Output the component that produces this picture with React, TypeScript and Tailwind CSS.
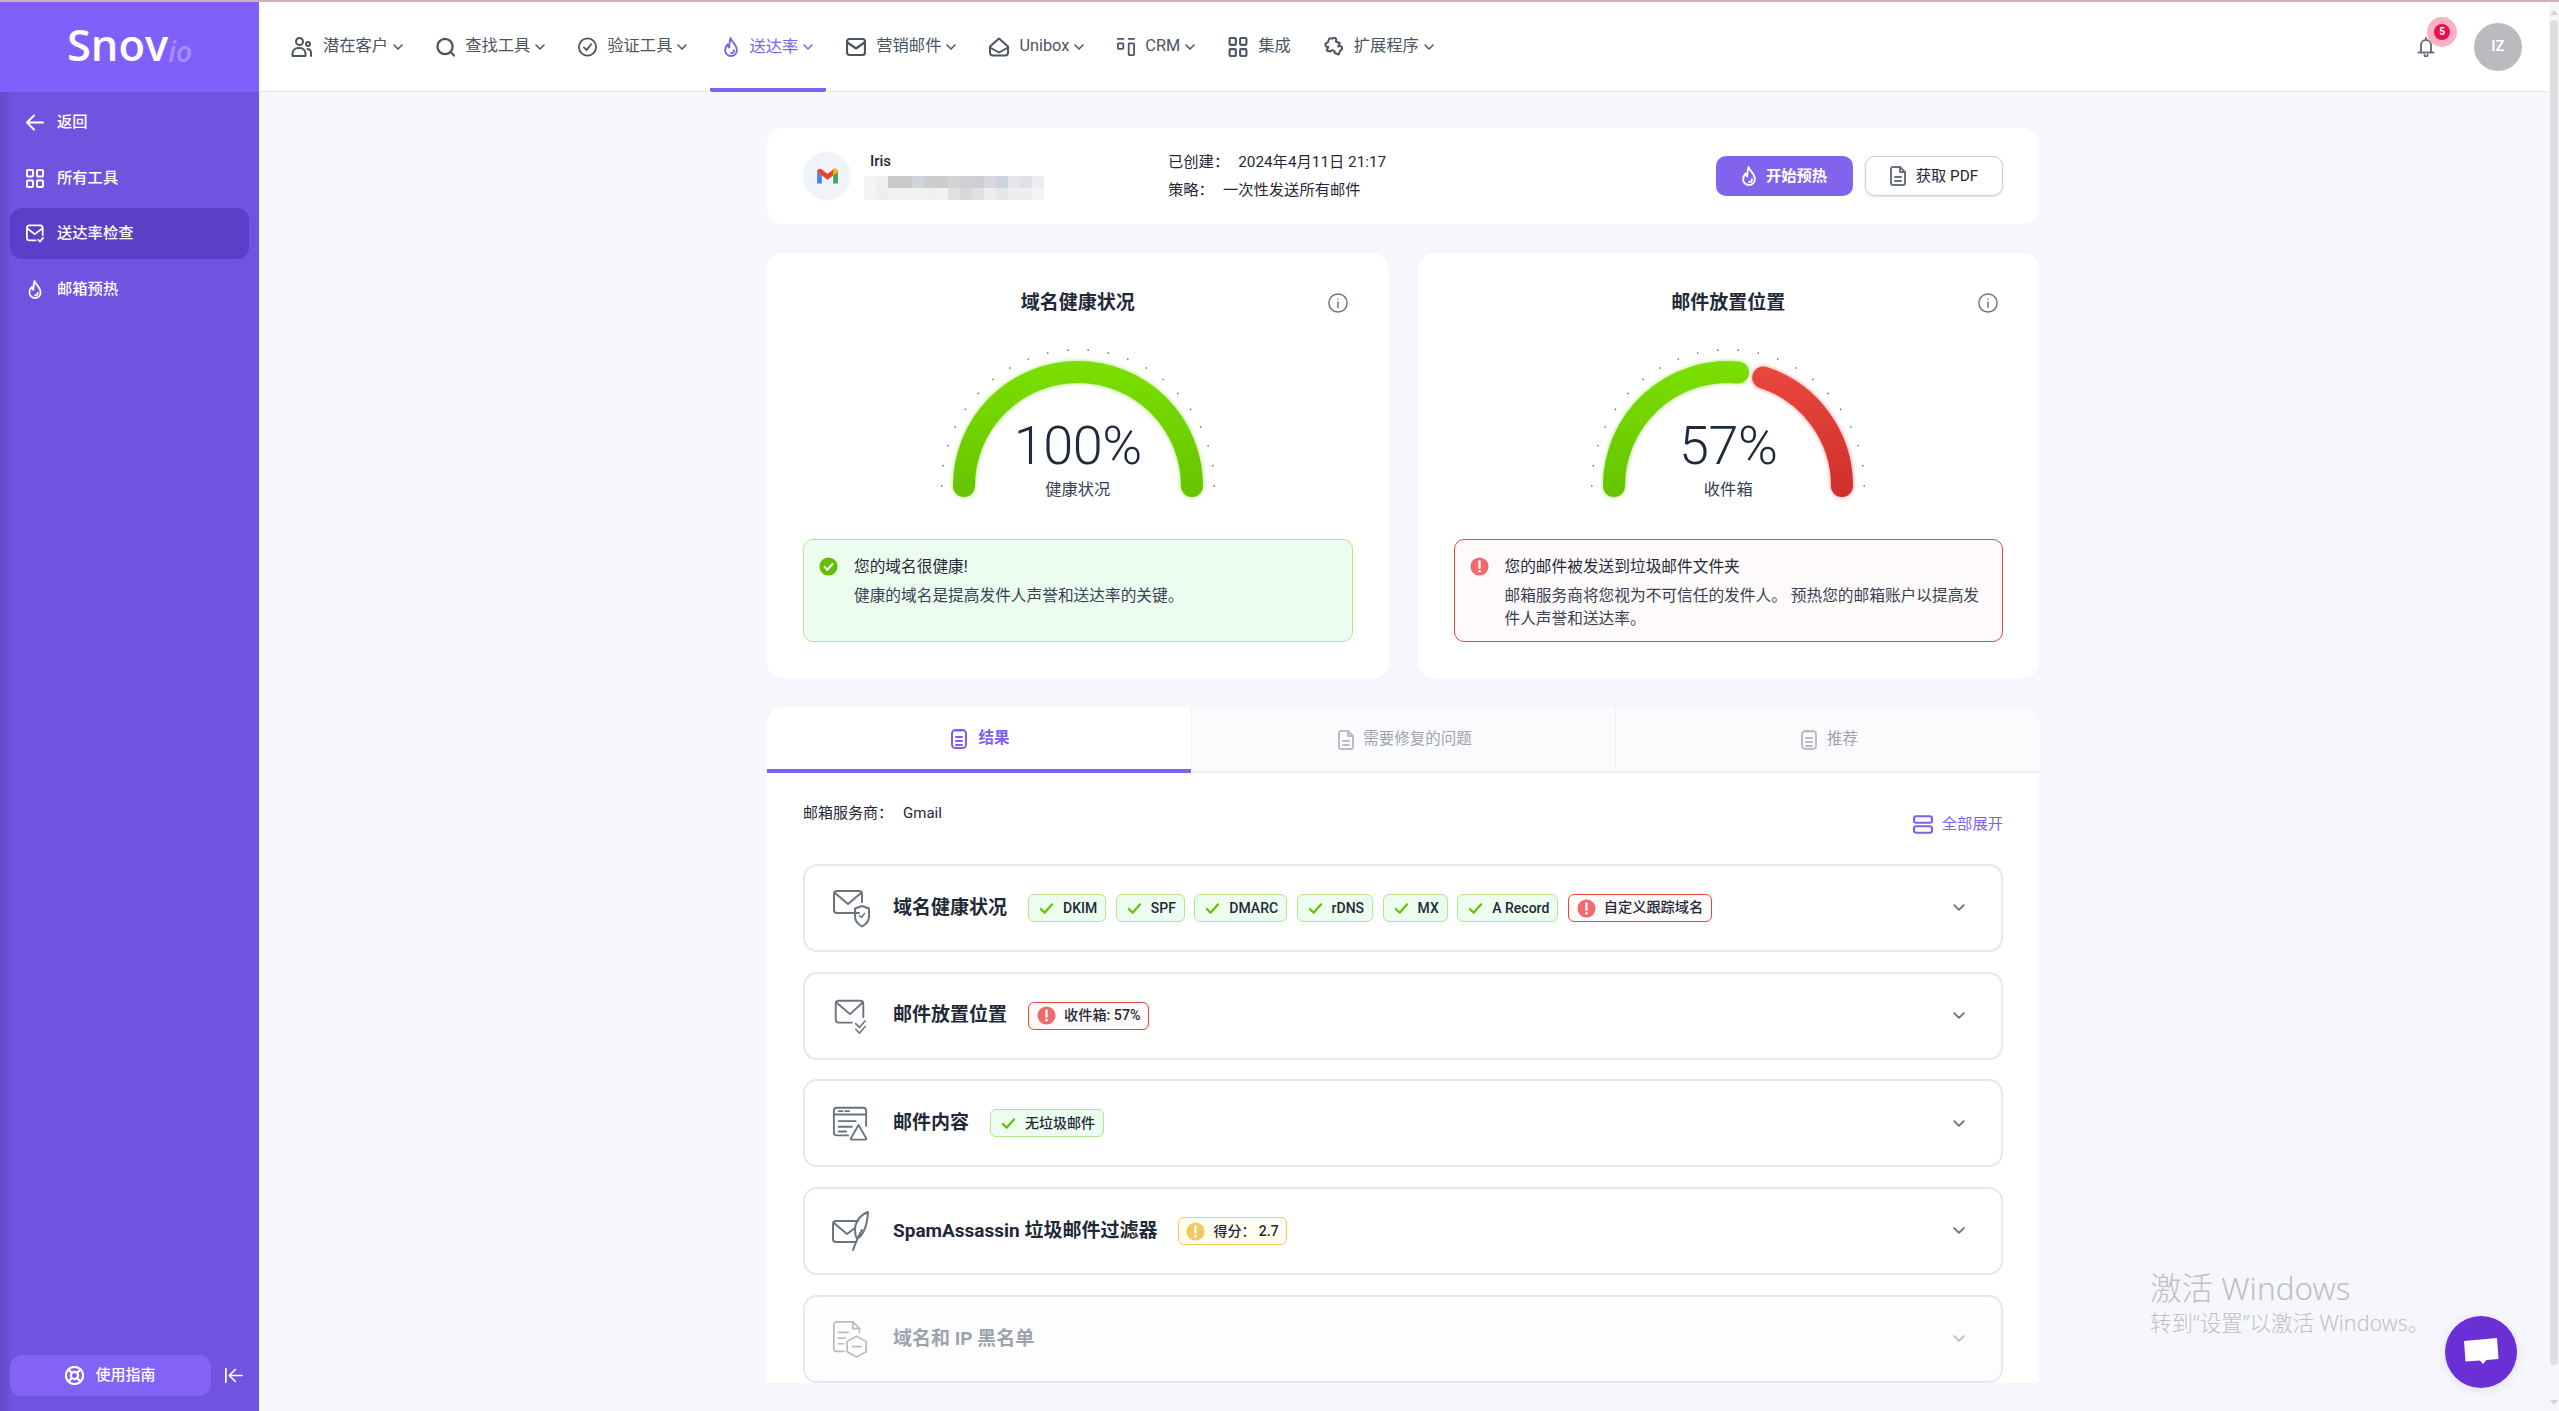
import type { ReactNode } from "react";

type IconProps = { className?: string };

const Svg = ({ className, children, sw = 2, vb = "0 0 24 24" }: { className?: string; children: ReactNode; sw?: number; vb?: string }) => (
  <svg viewBox={vb} fill="none" stroke="currentColor" strokeWidth={sw} strokeLinecap="round" strokeLinejoin="round" className={className}>
    {children}
  </svg>
);

const Chevron = ({ className }: IconProps) => (
  <svg viewBox="0 0 10 6" fill="none" stroke="currentColor" strokeWidth="1.5" strokeLinecap="round" strokeLinejoin="round" className={className}>
    <path d="M1 1l4 4 4-4" />
  </svg>
);
const Flame = ({ className }: IconProps) => (
  <Svg className={className} vb="5 1.500 14 20.500" sw={1.900}>
    <path d="M11.500 2.500c.6 3.500 6.500 6.500 6.500 12.500a6 6 0 0 1-12 0c0-2.600 1-4.500 2.500-6 .2 1.700.8 2.700 1.700 3.200C10.400 9 10.400 5.500 11.500 2.500z" />
    <path d="M15 15a3 3 0 0 1-3 3" />
  </Svg>
);
const Users = ({ className }: IconProps) => (
  <Svg className={className} vb="2 2 21 20">
    <circle cx="10" cy="6.500" r="3.500" />
    <path d="M3 21v-2.500a5.500 5.500 0 0 1 5.500-5.500h2a5.500 5.500 0 0 1 5.500 5.500V21z" />
    <circle cx="18.500" cy="9" r="2" />
    <path d="M18 14c2 .3 3.500 2 3.500 4v3" />
  </Svg>
);
const Search = ({ className }: IconProps) => (
  <Svg className={className} sw={2.400} vb="2 2 20 20">
    <circle cx="11.500" cy="11.500" r="8" />
    <path d="M17.500 17.500L21 21" />
  </Svg>
);
const CheckCircle = ({ className }: IconProps) => (
  <Svg className={className} vb="1.500 1.500 21 21">
    <circle cx="12" cy="12" r="9.500" />
    <path d="M8 12.500l3 3 5-6.500" />
  </Svg>
);
const Mail = ({ className }: IconProps) => (
  <Svg className={className} sw={2.200} vb="2 3 20 18">
    <rect x="3" y="4" width="18" height="16" rx="2.500" />
    <path d="M3.500 7.500L12 13.500l8.500-6" />
  </Svg>
);
const Inbox = ({ className }: IconProps) => (
  <Svg className={className} vb="2 3 20 19">
    <path d="M3 12L12 4l9 8v6a3 3 0 0 1-3 3H6a3 3 0 0 1-3-3z" />
    <path d="M3 13l9 5 9-5" />
  </Svg>
);
const Crm = ({ className }: IconProps) => (
  <Svg className={className} vb="2 2 20 20">
    <path d="M3 3h6M15 3h6" />
    <rect x="3" y="8" width="6" height="6" rx="1" />
    <rect x="15" y="8" width="6" height="13" rx="1" />
  </Svg>
);
const Grid = ({ className }: IconProps) => (
  <Svg className={className} vb="3 2.500 18 19">
    <rect x="4" y="3.500" width="6" height="6.500" rx="1" />
    <rect x="14" y="3.500" width="6" height="6.500" rx="1" />
    <rect x="4" y="14" width="6" height="6.500" rx="1" />
    <rect x="14" y="14" width="6" height="6.500" rx="1" />
  </Svg>
);
const Puzzle = ({ className }: IconProps) => (
  <Svg className={className} vb="3 2 18.500 20">
    <path d="M11 3.500a2 2 0 0 1 3.500 1.500l-.5 1.500 4 1.500-1.500 3.500a2.200 2.200 0 0 1 3 3.500l-1 .5-1.500 4-4-1.500a2.300 2.300 0 0 0-4.300-1.500L5 15.500 6.500 12a2.300 2.300 0 0 1-2-4l1.500-.5L7.500 3.500z" />
  </Svg>
);
const ArrowBack = ({ className }: IconProps) => (
  <Svg className={className} vb="3 3 18 18">
    <path d="M20 12H5M11 5l-7 7 7 7" />
  </Svg>
);
const MailCheck = ({ className }: IconProps) => (
  <Svg className={className} vb="2 2 20.500 20.500">
    <path d="M13 20H6a3 3 0 0 1-3-3V6a3 3 0 0 1 3-3h12a3 3 0 0 1 3 3v8" />
    <path d="M3.500 6.500L12 13l8.500-6.500" />
    <path d="M16 19.500l2 2 3.500-4.500" />
  </Svg>
);
const Buoy = ({ className }: IconProps) => (
  <Svg className={className} sw={2.400} vb="1.500 1.500 21 21">
    <circle cx="12" cy="12" r="9.500" />
    <circle cx="12" cy="12" r="4" />
    <path d="M5.300 5.300l4 4M14.700 14.700l4 4M18.700 5.300l-4 4M9.300 14.700l-4 4" />
  </Svg>
);
const Collapse = ({ className }: IconProps) => (
  <Svg className={className} vb="2 3 21 18">
    <path d="M3 4v16M22 12H8M14 5l-7 7 7 7" />
  </Svg>
);
const Info = ({ className }: IconProps) => (
  <Svg className={className} sw={1.600} vb="1 1 22 22">
    <circle cx="12" cy="12" r="10" />
    <path d="M12 11v6" />
    <path d="M12 7.500v.1" />
  </Svg>
);
const Bell = ({ className }: IconProps) => (
  <Svg className={className} sw={2} vb="4 2 16 20">
    <path d="M7 17V10a5 5 0 0 1 10 0v7" />
    <path d="M4.500 17.500h15M12 3v2M10.500 20a1.500 1.500 0 0 0 3 0" />
  </Svg>
);
const Doc = ({ className }: IconProps) => (
  <Svg className={className} vb="4 2 16 20">
    <path d="M7 3h7l5 5v11a2 2 0 0 1-2 2H7a2 2 0 0 1-2-2V5a2 2 0 0 1 2-2z" />
    <path d="M14 3v5h5M9 13h6M9 17h6" />
  </Svg>
);
const Note = ({ className }: IconProps) => (
  <Svg className={className} vb="4 2 16 20">
    <rect x="5" y="3" width="14" height="18" rx="3.500" />
    <path d="M9 3.500h6M9 10h6M9 14h6M9 18h6" />
  </Svg>
);
const Stack = ({ className }: IconProps) => (
  <Svg className={className} sw={2.200} vb="2 3 20 18.500">
    <rect x="3" y="4" width="18" height="6.500" rx="2" />
    <rect x="3" y="14" width="18" height="6.500" rx="2" />
  </Svg>
);
const Check = ({ className }: IconProps) => (
  <svg viewBox="0 0 16 16" fill="none" stroke="currentColor" strokeWidth="2.200" strokeLinecap="round" strokeLinejoin="round" className={className}>
    <path d="M2 8.500l4 4L14 3.500" />
  </svg>
);
const Alert = ({ className }: IconProps) => (
  <svg viewBox="0 0 20 20" className={className}>
    <circle cx="10" cy="10" r="9.500" fill="currentColor" />
    <path d="M10 4.500v7" stroke="white" strokeWidth="2.400" strokeLinecap="round" />
    <circle cx="10" cy="15" r="1.400" fill="white" />
  </svg>
);
const OkDot = ({ className }: IconProps) => (
  <svg viewBox="0 0 20 20" className={className}>
    <circle cx="10" cy="10" r="9.500" fill="currentColor" />
    <path d="M5.800 10.400l3 3 5.400-6" fill="none" stroke="white" strokeWidth="2.200" strokeLinecap="round" strokeLinejoin="round" />
  </svg>
);
const Gmail = () => (
  <svg viewBox="0 0 24 18" className="h-[17px] w-[23px]">
    <path d="M1 4v12.500h5V8z" fill="#4285f4" />
    <path d="M23 4v12.500h-5V8z" fill="#34a853" />
    <path d="M1 4c0-3 3-4 5-2.500L12 6l6-4.500C20 0 23 1 23 4l-5 4-6 4.500L6 8z" fill="#ea4335" />
    <path d="M18 1.500C20 0 23 1 23 4l-5 4z" fill="#fbbc04" />
  </svg>
);

const RowShield = ({ className }: IconProps) => (
  <svg viewBox="0 0 40 40" fill="none" stroke="currentColor" strokeWidth="2" strokeLinecap="round" strokeLinejoin="round" className={className}>
    <path d="M28 25H6a3 3 0 0 1-3-3V6a3 3 0 0 1 3-3h22a3 3 0 0 1 3 3v8" />
    <path d="M4 5l13 11L30 5" />
    <path d="M31 18l7 2.500v8c0 5-3.500 8-7 10-3.500-2-7-5-7-10v-8z" />
    <path d="M28.500 27.500l2 2 3-4" strokeWidth="1.500" />
  </svg>
);
const RowChecks = ({ className }: IconProps) => (
  <svg viewBox="0 0 40 40" fill="none" stroke="currentColor" strokeWidth="2" strokeLinecap="round" strokeLinejoin="round" className={className}>
    <path d="M22 27H8a3 3 0 0 1-3-3V7a3 3 0 0 1 3-3h23a3 3 0 0 1 3 3v14" />
    <path d="M6 6l14 12L33 6" />
    <path d="M26 28l4 4 6-7M26 34l4 4 6-7" strokeWidth="1.600" />
  </svg>
);
const RowWeb = ({ className }: IconProps) => (
  <svg viewBox="0 0 40 40" fill="none" stroke="currentColor" strokeWidth="2" strokeLinecap="round" strokeLinejoin="round" className={className}>
    <path d="M18 33H6a3 3 0 0 1-3-3V7a3 3 0 0 1 3-3h28a3 3 0 0 1 3 3v16" />
    <path d="M3 11h34M8 7.500h4M15 7.500h4M8 18h18M8 24h14M8 29h8" />
    <path d="M29 22l8 14a1 1 0 0 1-1 1.500H22a1 1 0 0 1-1-1.500z" />
  </svg>
);
const RowFeather = ({ className }: IconProps) => (
  <svg viewBox="0 0 40 40" fill="none" stroke="currentColor" strokeWidth="2" strokeLinecap="round" strokeLinejoin="round" className={className}>
    <path d="M24 31H5a3 3 0 0 1-3-3V13a3 3 0 0 1 3-3h22" />
    <path d="M3 12l13 11 8-6" />
    <path d="M37 1c-8 3-13 10-13 18 0 4 1 7 2 9 5-3 10-11 11-27zM22 39c2-5 5-14 9-20" />
  </svg>
);
const RowDoc = ({ className }: IconProps) => (
  <svg viewBox="0 0 40 40" fill="none" stroke="currentColor" strokeWidth="1.800" strokeLinecap="round" strokeLinejoin="round" className={className}>
    <path d="M14 33H6a3 3 0 0 1-3-3V5a3 3 0 0 1 3-3h17l7 7v4" />
    <path d="M23 2v7h7M8 13h10M8 19h7M8 25h5" />
    <path d="M27 17l10 5.500v11L27 39l-10-5.500v-11z" />
    <path d="M22.500 28h9" />
  </svg>
);

const navItems = [
  { icon: Users, label: "潜在客户", iw: "w-[22px]", caret: true },
  { icon: Search, label: "查找工具", iw: "w-[19px]", caret: true },
  { icon: CheckCircle, label: "验证工具", iw: "w-[19px]", caret: true },
  { icon: Flame, label: "送达率", iw: "w-[16px]", caret: true, active: true },
  { icon: Mail, label: "营销邮件", iw: "w-[20px]", caret: true },
  { icon: Inbox, label: "Unibox", iw: "w-[20px]", caret: true },
  { icon: Crm, label: "CRM", iw: "w-[18px]", caret: true },
  { icon: Grid, label: "集成", iw: "w-[20px]" },
  { icon: Puzzle, label: "扩展程序", iw: "w-[20px]", caret: true },
];

const sideItems = [
  { icon: ArrowBack, label: "返回" },
  { icon: Grid, label: "所有工具" },
  { icon: MailCheck, label: "送达率检查", active: true },
  { icon: Flame, label: "邮箱预热" },
];

const blurTop = ["bg-[#f3f3f5]", "bg-[#efeff1]", "bg-[#c9c9cc]", "bg-[#c9c9cc]", "bg-[#d0d4dc]", "bg-[#cdcdd0]", "bg-[#cdcdd0]", "bg-[#d4d4d7]", "bg-[#d0d0d3]", "bg-[#ccd0d6]", "bg-[#d8d8dc]", "bg-[#ccd4de]", "bg-[#e6e6e8]", "bg-[#dde0e4]", "bg-[#eeeef0]"];
const blurBottom = ["bg-[#f4f4f5]", "bg-[#eeeef0]", "bg-[#f2f2f3]", "bg-[#f2f2f3]", "bg-[#f2f2f3]", "bg-[#f0f0f2]", "bg-[#f2f2f3]", "bg-[#e0e0e2]", "bg-[#d8d8da]", "bg-[#e0e0e2]", "bg-[#eeeef0]", "bg-[#e6e6e8]", "bg-[#eeeef0]", "bg-[#eeeef0]", "bg-[#f4f4f5]"];

// angles are measured from the +x axis, 180 = left end of the gauge
const polar = (r: number, deg: number) => {
  const a = (deg * Math.PI) / 180;
  return { x: 150 + r * Math.cos(a), y: 145 - r * Math.sin(a) };
};
const arc = (from: number, to: number) => {
  const s = polar(114, from);
  const e = polar(114, to);
  return `M${s.x} ${s.y}A114 114 0 0 1 ${e.x} ${e.y}`;
};

function Gauge({ id, value, label, split }: { id: string; value: string; label: string; split?: boolean }) {
  const ticks = Array.from({ length: 22 }, (_, i) => (i * 180) / 21);
  return (
    <div className="relative mx-auto mt-[26px] h-[160px] w-[300px]">
      <svg viewBox="0 0 300 160" className="h-[160px] w-[300px]" fill="none">
        <defs>
          <linearGradient id={`${id}-g`} gradientUnits="userSpaceOnUse" x1="0" y1="20" x2="0" y2="156">
            <stop offset="0" stopColor="#7bdf00" />
            <stop offset="1" stopColor="#66c400" />
          </linearGradient>
          <linearGradient id={`${id}-r`} gradientUnits="userSpaceOnUse" x1="0" y1="30" x2="0" y2="156">
            <stop offset="0" stopColor="#e8463e" />
            <stop offset="1" stopColor="#cf2f2a" />
          </linearGradient>
        </defs>
        {ticks.map((d) => {
          const a = polar(135.5, d);
          const b = polar(137, d);
          return <line key={d} x1={a.x} y1={a.y} x2={b.x} y2={b.y} stroke="#6b7280" strokeWidth="1.500" />;
        })}
        {split ? (
          <>
            <path d={arc(180, 85)} stroke={`url(#${id}-g)`} strokeWidth="22" strokeLinecap="round" className="drop-shadow-[0_0_2px_rgba(110,210,0,0.6)]" />
            <path d={arc(72, 0)} stroke={`url(#${id}-r)`} strokeWidth="22" strokeLinecap="round" className="drop-shadow-[0_0_2px_rgba(230,60,50,0.6)]" />
          </>
        ) : (
          <path d={arc(180, 0)} stroke={`url(#${id}-g)`} strokeWidth="22" strokeLinecap="round" className="drop-shadow-[0_0_2px_rgba(110,210,0,0.6)]" />
        )}
      </svg>
      <div className="absolute inset-x-0 top-[75px] flex flex-col items-center">
        <span className="text-[54px] leading-[60px] font-light tracking-[-0.5px] text-[#1f2a3c]">{value}</span>
        <span className="mt-[2px] text-[16.300px] leading-[24px] text-[#374151]">{label}</span>
      </div>
    </div>
  );
}

function GaugeCard({ id, title, value, label, split, children }: { id: string; title: string; value: string; label: string; split?: boolean; children: ReactNode }) {
  return (
    <div className="rounded-[16px] bg-white px-[36px] pt-[38px] pb-[36px]">
      <div className="relative flex h-[24px] items-center justify-center">
        <h2 className="text-[19px] font-bold text-[#1f2937]">{title}</h2>
        <Info className="absolute top-[2px] right-[5px] h-[20px] w-[20px] text-[#6b7280]" />
      </div>
      <Gauge id={id} value={value} label={label} split={split} />
      {children}
    </div>
  );
}

function Chip({ tone, children }: { tone: "ok" | "bad" | "warn"; children: ReactNode }) {
  if (tone === "ok") {
    return (
      <span className="flex h-[28px] items-center gap-[9px] rounded-[6px] border-[1.500px] border-[#b5e58f] bg-[#ecfdf0] pr-[8px] pl-[10px] text-[14px] font-medium text-[#1f2937]">
        <Check className="h-[15px] w-[15px] text-[#62bf00]" />
        {children}
      </span>
    );
  }
  return (
    <span
      className={
        tone === "bad"
          ? "flex h-[28px] items-center gap-[8px] rounded-[6px] border-[1.500px] border-[#e8453f] bg-[#fffafa] pr-[8px] pl-[8px] text-[14.200px] font-medium text-[#1f2937]"
          : "flex h-[28px] items-center gap-[8px] rounded-[6px] border-[1.500px] border-[#f7ca58] bg-[#fffcf0] pr-[7px] pl-[7px] text-[14px] font-medium text-[#1f2937]"
      }
    >
      <Alert className={tone === "bad" ? "h-[19px] w-[19px] text-[#f06a6f]" : "h-[19px] w-[19px] text-[#f2c960]"} />
      {children}
    </span>
  );
}

function Row({ icon, title, muted, children }: { icon: ReactNode; title: string; muted?: boolean; children?: ReactNode }) {
  return (
    <div className={muted ? "flex h-[88px] items-center rounded-[14px] border-2 border-[#e8e8ea] bg-[#fdfdfe] pr-[36px] pl-[26px]" : "flex h-[88px] items-center rounded-[14px] border-2 border-[#e8e8ea] bg-white pr-[36px] pl-[26px]"}>
      <div className={muted ? "w-[40px] shrink-0 text-[#b8bcc4]" : "w-[40px] shrink-0 text-[#6b7280]"}>{icon}</div>
      <h3 className={muted ? "ml-[22px] text-[19px] font-bold text-[#9ca3af]" : "ml-[22px] text-[19px] font-bold text-[#1f2937]"}>{title}</h3>
      <div className="ml-[21px] flex items-center gap-[9.500px]">{children}</div>
      <Chevron className={muted ? "ml-auto w-[12px] text-[#b8bcc4]" : "ml-auto w-[12px] text-[#6b7280]"} />
    </div>
  );
}

export default function App() {
  return (
    <div className="relative flex h-[1411px] w-full flex-col overflow-hidden bg-[#f6f7fc] font-[family-name:Roboto,'Noto_Sans_CJK_SC',sans-serif] text-[#1f2937]">
      <div className="h-[2px] shrink-0 bg-[#c9b2bd]" />
      <div className="flex min-h-0 flex-1">
        <aside className="flex w-[259px] shrink-0 flex-col bg-[linear-gradient(90deg,#654cc9_0,#7054e0_14px)]">
          <div className="flex h-[90px] shrink-0 items-center justify-center bg-[#8060fb] pb-[5px] font-[family-name:'Open_Sans',sans-serif] text-white">
            <span className="text-[43.500px] leading-none font-semibold">Snov</span>
            <span className="mt-[12px] text-[28px] leading-none font-semibold text-[#a88ffd] italic">io</span>
          </div>
          <nav className="flex flex-col gap-[4.500px] px-[10px] pt-[5px]">
            {sideItems.map((it) => (
              <div key={it.label} className={it.active ? "flex h-[51px] items-center gap-[13px] rounded-[12px] bg-[#5b3fc8] pl-[16px] text-[15.300px] font-medium text-white" : "flex h-[51px] items-center gap-[13px] rounded-[12px] pl-[16px] text-[15.300px] font-medium text-white"}>
                <it.icon className="h-[19px] w-[18px] shrink-0" />
                {it.label}
              </div>
            ))}
          </nav>
          <div className="mt-auto flex items-center pr-[16px] pb-[15px] pl-[10px]">
            <div className="flex h-[41px] w-[201px] items-center justify-center gap-[11px] rounded-[12px] bg-[#8263f5] text-[15px] font-medium text-white">
              <Buoy className="h-[19px] w-[19px]" />
              使用指南
            </div>
            <Collapse className="ml-auto h-[17px] w-[18px] text-white" />
          </div>
        </aside>

        <div className="flex min-w-0 flex-1 flex-col">
          <header className="flex h-[90px] shrink-0 items-center border-b border-[#e5e7eb] bg-white pr-[27px] pl-[19px]">
            <nav className="flex h-full gap-[7px]">
              {navItems.map((it) => (
                <div key={it.label} className={it.active ? "-mb-px ml-[3px] flex items-center rounded-b-[2px] border-b-4 border-[#7e5fee] px-[13px] pt-[4px] text-[16.300px] text-[#7e5fee]" : "flex items-center px-[13px] text-[16.300px] text-[#4b5563]"}>
                  <it.icon className={`h-[20px] ${it.iw} shrink-0`} />
                  <span className="ml-[10px]">{it.label}</span>
                  {it.caret && <Chevron className="ml-[5px] w-[10px]" />}
                </div>
              ))}
            </nav>
            <div className="relative ml-auto h-[20px] w-[18px] text-[#6b7280]">
              <Bell className="h-[20px] w-[18px]" />
              <span className="absolute -top-[20px] left-[10px] flex h-[30px] w-[30px] items-center justify-center rounded-full bg-[#fbb0c3]">
                <span className="flex h-[16px] w-[16px] items-center justify-center rounded-full bg-[#e8114f] text-[10px] font-bold text-white">5</span>
              </span>
            </div>
            <div className="ml-[39px] flex h-[48px] w-[48px] items-center justify-center rounded-full bg-[#b9bbc0] text-[15px] font-medium text-white">IZ</div>
          </header>

          <main className="ml-[508px] w-[1272px] pt-[36px]">
            <section className="flex h-[96px] items-center rounded-[16px] bg-white px-[36px]">
              <div className="flex h-[48px] w-[48px] shrink-0 items-center justify-center rounded-full bg-[#f0f3f8]">
                <Gmail />
              </div>
              <div className="ml-[13px] w-[304px] shrink-0">
                <p className="-mt-[1px] pl-[6px] text-[15px] leading-[19px] font-medium">Iris</p>
                <div className="mt-[5px] w-[180px]">
                  <div className="flex">
                    {blurTop.map((c, i) => (
                      <span key={i} className={`h-[12px] flex-1 ${c}`} />
                    ))}
                  </div>
                  <div className="flex">
                    {blurBottom.map((c, i) => (
                      <span key={i} className={`h-[12px] flex-1 ${c}`} />
                    ))}
                  </div>
                </div>
              </div>
              <div className="text-[15.300px] leading-[28px] text-[#1f2937]">
                <p className="flex gap-[9px]">
                  <span>已创建：</span>2024年4月11日 21:17
                </p>
                <p className="flex gap-[9px]">
                  <span>策略：</span>一次性发送所有邮件
                </p>
              </div>
              <div className="ml-auto flex gap-[12px]">
                <button className="flex h-[40px] w-[137px] items-center justify-center gap-[10px] rounded-[10px] bg-[#8263ed] text-[15.300px] font-bold text-white">
                  <Flame className="h-[20px] w-[14px]" />
                  开始预热
                </button>
                <button className="flex h-[40px] w-[138px] items-center justify-center gap-[10px] rounded-[10px] border-[1.500px] border-[#cbcde0] bg-white text-[15.300px] text-[#1f2937] shadow-[0_1px_2px_rgba(100,100,140,0.2)]">
                  <Doc className="h-[20px] w-[16px] text-[#6b7280]" />
                  获取 PDF
                </button>
              </div>
            </section>

            <section className="mt-[29px] grid grid-cols-2 gap-[29px]">
              <GaugeCard id="health" title="域名健康状况" value="100%" label="健康状况">
                <div className="mt-[38px] flex h-[103px] gap-[16px] rounded-[10px] border-[1.500px] border-[#b5e58f] bg-[#ecfdf0] pt-[14.500px] pl-[15px]">
                  <OkDot className="mt-[2px] h-[19px] w-[19px] shrink-0 text-[#62bf00]" />
                  <div className="text-[15.700px] leading-[23px]">
                    <p className="text-[#1f2937]">您的域名很健康!</p>
                    <p className="mt-[6px] text-[#374151]">健康的域名是提高发件人声誉和送达率的关键。</p>
                  </div>
                </div>
              </GaugeCard>
              <GaugeCard id="place" title="邮件放置位置" value="57%" label="收件箱" split>
                <div className="mt-[38px] flex h-[103px] gap-[16px] rounded-[10px] border-[1.500px] border-[#e8453f] bg-[#fffafa] pt-[14.500px] pr-[14px] pl-[15px]">
                  <Alert className="mt-[2px] h-[19px] w-[19px] shrink-0 text-[#f06a6f]" />
                  <div className="text-[15.700px] leading-[23px]">
                    <p className="text-[#1f2937]">您的邮件被发送到垃圾邮件文件夹</p>
                    <p className="mt-[6px] text-[#374151]">邮箱服务商将您视为不可信任的发件人。 预热您的邮箱账户以提高发件人声誉和送达率。</p>
                  </div>
                </div>
              </GaugeCard>
            </section>

            <section className="mt-[29px] overflow-hidden rounded-t-[16px] bg-white">
              <div className="grid h-[66px] grid-cols-3">
                <div className="flex items-center justify-center gap-[11px] border-b-4 border-[#7e5fee] pt-[2px] pl-[3px] text-[15.500px] font-bold text-[#7e5fee]">
                  <Note className="h-[20px] w-[16px]" />
                  结果
                </div>
                <div className="flex items-center justify-center gap-[9px] border-b-2 border-l border-[#f1f1f5] bg-[#fbfbfe] pt-[1px] pl-[3px] text-[15.500px] text-[#9ca3af]">
                  <Doc className="h-[20px] w-[16px] text-[#b8bcc4]" />
                  需要修复的问题
                </div>
                <div className="flex items-center justify-center gap-[10px] border-b-2 border-l border-[#f1f1f5] bg-[#fbfbfe] pt-[1px] pl-[4px] text-[15.500px] text-[#9ca3af]">
                  <Note className="h-[20px] w-[16px] text-[#b8bcc4]" />
                  推荐
                </div>
              </div>
              <div className="px-[36px] pt-[30px]">
                <div className="flex items-start justify-between">
                  <p className="flex gap-[10px] text-[15px] leading-[20px] text-[#1f2937]">
                    <span>邮箱服务商：</span>Gmail
                  </p>
                  <p className="mt-[11px] flex items-center gap-[9px] text-[15.300px] leading-[20px] text-[#7e5fee]">
                    <Stack className="h-[19px] w-[20px]" />
                    全部展开
                  </p>
                </div>
                <div className="mt-[30px] flex flex-col gap-[19.700px]">
                  <Row icon={<RowShield className="h-[40px] w-[40px]" />} title="域名健康状况">
                    <Chip tone="ok">DKIM</Chip>
                    <Chip tone="ok">SPF</Chip>
                    <Chip tone="ok">DMARC</Chip>
                    <Chip tone="ok">rDNS</Chip>
                    <Chip tone="ok">MX</Chip>
                    <Chip tone="ok">A Record</Chip>
                    <Chip tone="bad">自定义跟踪域名</Chip>
                  </Row>
                  <Row icon={<RowChecks className="h-[38px] w-[38px]" />} title="邮件放置位置">
                    <Chip tone="bad">收件箱: 57%</Chip>
                  </Row>
                  <Row icon={<RowWeb className="h-[38px] w-[38px]" />} title="邮件内容">
                    <Chip tone="ok">无垃圾邮件</Chip>
                  </Row>
                  <Row icon={<RowFeather className="h-[40px] w-[40px]" />} title="SpamAssassin 垃圾邮件过滤器">
                    <Chip tone="warn">得分： 2.7</Chip>
                  </Row>
                  <Row icon={<RowDoc className="h-[38px] w-[38px]" />} title="域名和 IP 黑名单" muted />
                </div>
              </div>
            </section>
          </main>
        </div>

        <div className="flex w-[10px] shrink-0 flex-col items-center bg-[#f7f7f9] pb-[6px]">
          <span className="mt-[8px] h-0 w-0 border-x-[4px] border-b-[5px] border-x-transparent border-b-[#d5d5d8]" />
          <span className="mt-[5px] h-[1345px] w-[8px] rounded-full bg-[#dfdfe1]" />
          <span className="mt-auto h-0 w-0 border-x-[4px] border-t-[5px] border-x-transparent border-t-[#d5d5d8]" />
        </div>
      </div>

      <div className="absolute top-[1269px] left-[2150px] font-[family-name:'Noto_Sans','Noto_Sans_CJK_SC',sans-serif] font-light text-[#c0c0c4]">
        <p className="text-[31.500px] leading-[38px]">激活 Windows</p>
        <p className="text-[21.500px] leading-[31px]">转到“设置”以激活 Windows。</p>
      </div>
      <div className="absolute top-[1316px] left-[2445px] flex h-[72px] w-[72px] items-center justify-center rounded-full bg-[#6b2fd6] shadow-[0_2px_10px_rgba(60,30,140,0.12)]">
        <svg viewBox="0 0 36 30" className="h-[30px] w-[36px]">
          <path d="M1 4L34 1l1.500 21-12 1-3.500 4-3-3.500-14.500 1z" fill="white" />
        </svg>
      </div>
    </div>
  );
}
